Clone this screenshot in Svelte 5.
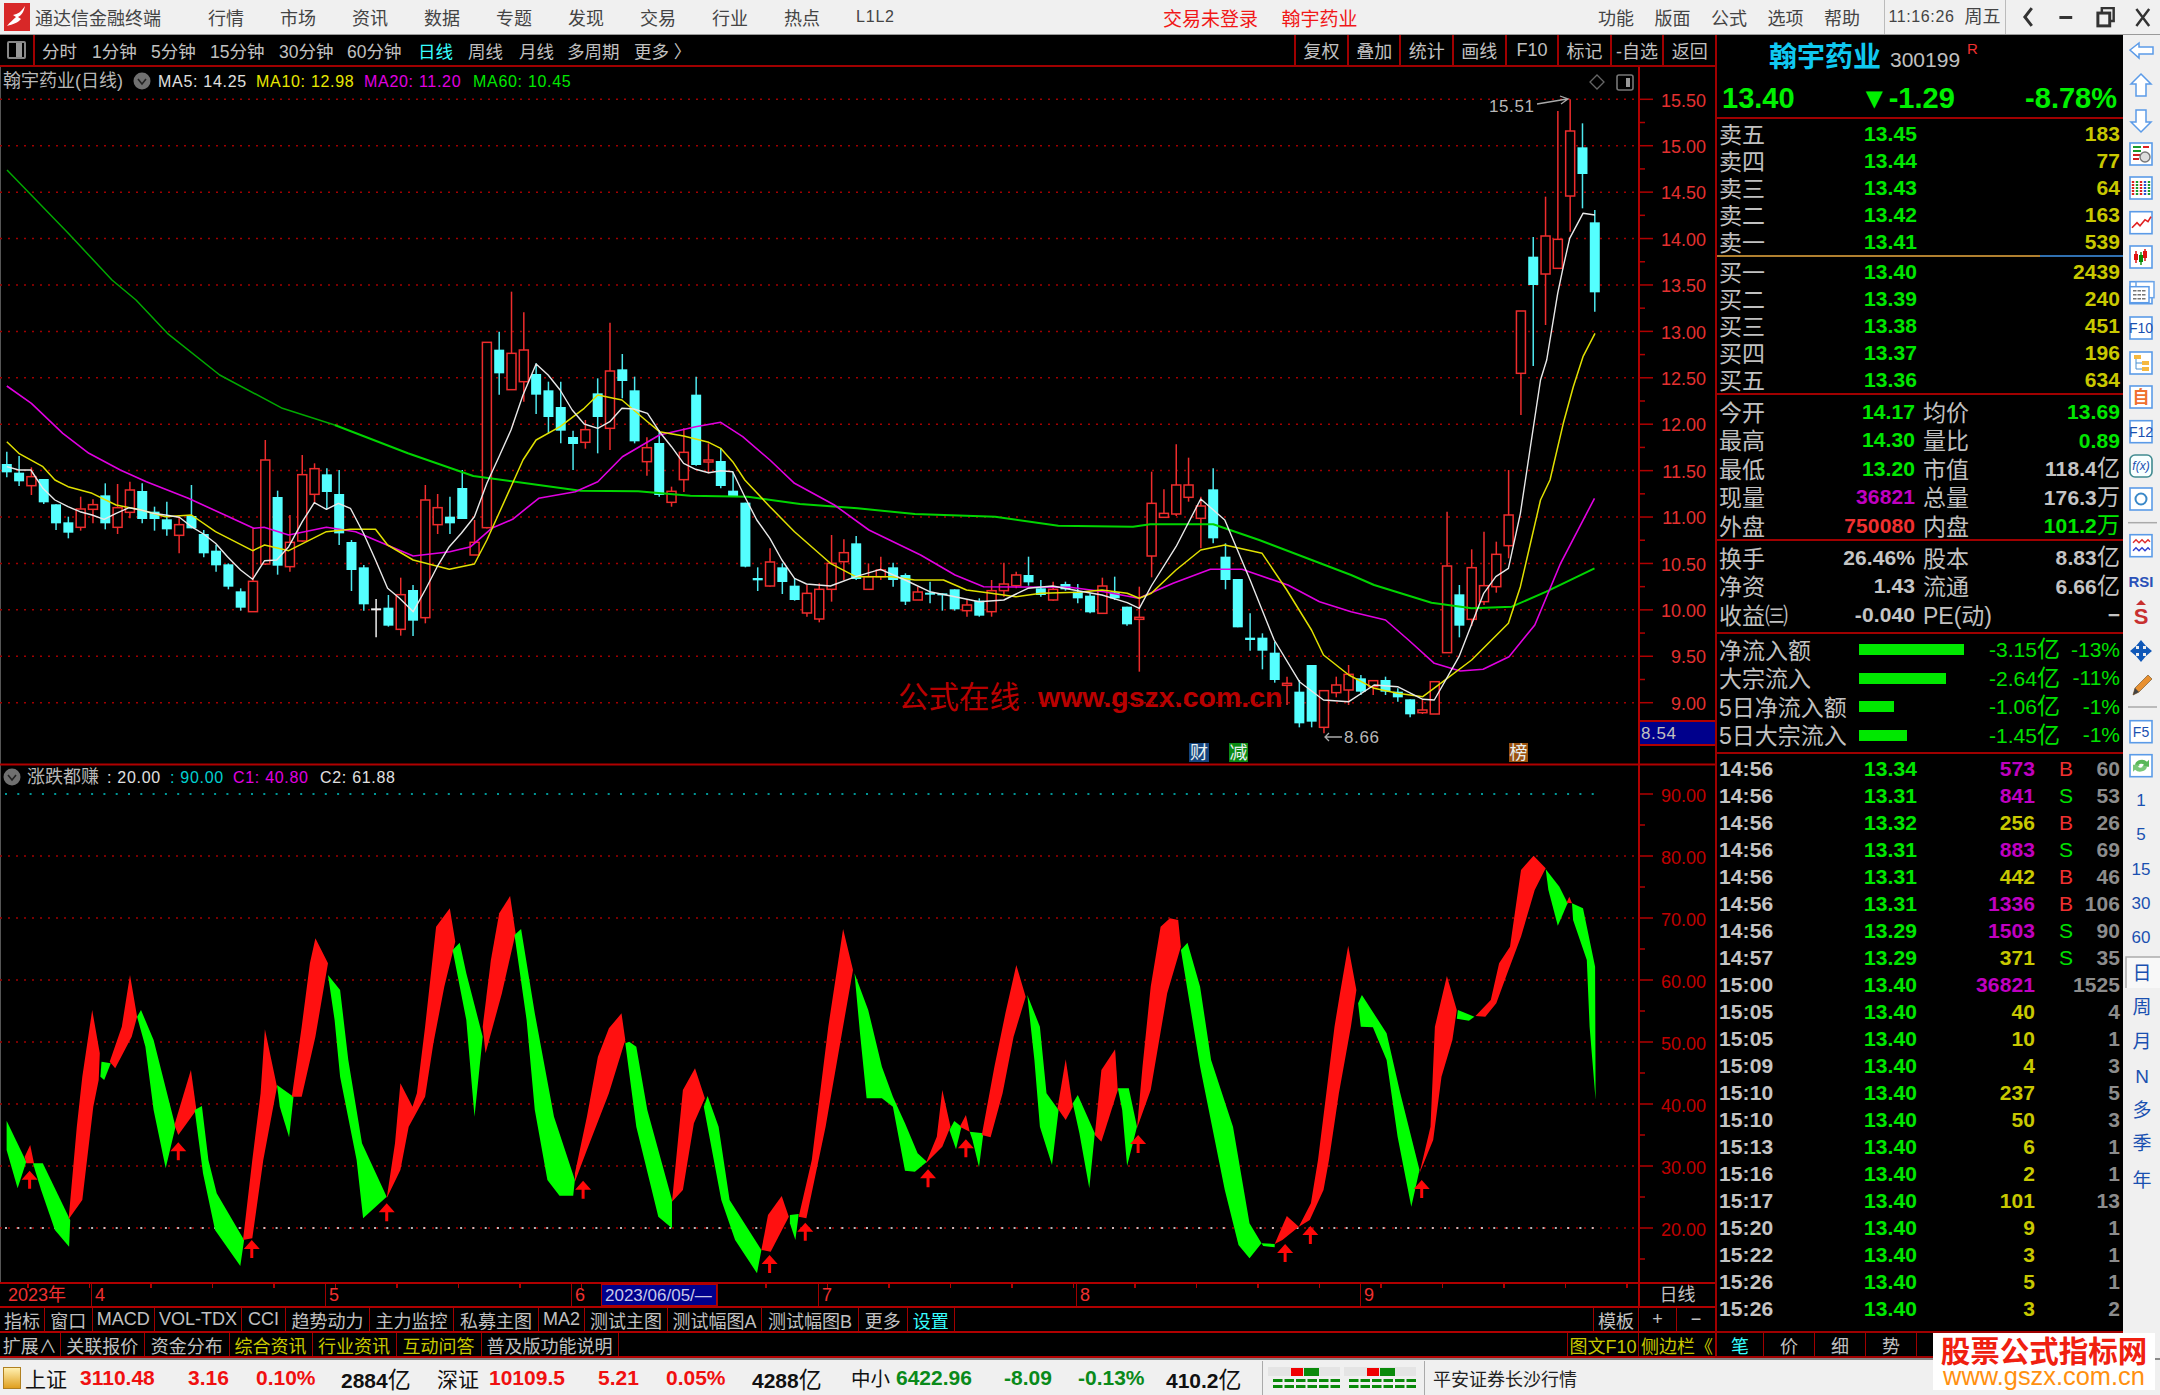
<script>
  const pts = (s, sx, ox, oy) => s.trim().split(/\s+/).map(p => { const [a, b] = p.split(',').map(Number); return [ox + a / sx, oy + b / 3]; });
  const poly = a => a.map(p => p[0].toFixed(1) + ',' + p[1].toFixed(1)).join(' ');
  const parts = t => { const m = /^(.*?)([亿万])$/.exec(t); return m ? [m[1], m[2]] : [t, '']; };

  const c7 = `515 552 577 592 c,528 578 604 618 c,562 590 617 645 r,597 597 667 672 c,673 673 730 750 c,710 727 758 775 c,650 687 742 752 r,658 674 688 730 r,610 646 730 748 c,612 683 742 762 r,605 630 697 715 r,610 633 717 730 c,680 695 717 752 c,665 718 748 767 c,710 734 766 820 r,615 708 745 745 c,750 762 820 832 c,795 812 856 875 c,850 853 920 928 c,925 934 983 992 c,745 904 995 995 r,480 540 852 855 r,632 651 857 884 c,705 787 860 875 r,525 584 783 785 r,550 566 643 670 r,565 583 636 688 c,570 642 760 795 c,780 786 870 933 c,855 862 973 992 c,957 985 987 1072 w,945 983 1037 1040 c,893 944 1048 1067 r,915 930 1022 1068 c,615 660 1013 1030 r,642 683 734 762 r,650 710 730 762 c,570 624 717 717 c,720 787 825 825 r,745 187 743 745 r,155 209 280 344 c,35 220 329 329 r,97 210 305 365 r,250 282 344 402 c,305 331 411 460 c,305 381 452 490 c,452 471 492 570 c,420 449 487 506 r,295 340 411 520 c,128 273 445 510 r,222 268 303 355 c,290 331 484 490 c,472 503 545 587 r,450 489 645 650 c,620 634 667 680 r,445 517 599 636 r,290 344 555 557 c,490 540 545 580 r,505 543 618 625 c,575 632 648 650 c,668 668 860 862 c,862 894 901 933 c,805 846 918 920 r,850 862 906 942 c,895 917 960 962 c,915 940 999 1010 r,910 928 1017 1027 r`;
  const c8 = `465 550 628 665 r,478 518 545 600 r,468 490 597 600 c,550 590 628 628 r,530 570 590 600 r,548 562 600 620 c,580 585 665 675 c,620 636 660 660 r,605 638 641 670 c,640 640 642 692 c,628 628 688 692 c,660 675 692 710 r,655 662 707 710 c,600 632 695 710 r,548 612 632 650 r,575 585 617 625 r,530 585 607 617 c,600 625 645 650 c,605 628 660 662 r,605 612 628 632 c,612 635 655 670 c,640 647 697 700 c,593 618 700 700 r,590 637 655 660 c,680 680 733 737 c,620 712 718 875 r,275 370 528 592 r,328 400 412 412 r,193 315 402 408 r,233 315 352 365 r,350 378 415 505 r,265 328 475 490 c,490 530 600 628 c,597 597 742 742 c,700 773 780 812 c,760 773 812 868 c,785 818 900 908 c,890 910 915 975 r,900 935 1030 1042 c,855 855 1025 1042 c,930 932 1042 1060 r,890 915 938 952 r,855 883 930 975 r,885 895 935 945 c,900 902 920 945 r,890 900 935 945 c,925 935 952 965 c,958 958 1003 1012 c,960 990 998 1002 r,905 905 1002 1002 r,395 558 818 818 r,615 643 737 772 c,508 563 718 738 r,455 617 665 675 r,485 523 620 638 r,270 405 497 535 r`;
  const c9 = `753 753 940 1065 r,531 590 675 918 c,410 528 642 795 r,153 538 625 625 r,118 213 408 515 r,190 262 342 445 c,450 487 697 755 c`;
  const parse = (s, oy) => s.split(',').map(r => { const f = r.split(' '); return { hi: oy + f[0] / 3, top: oy + f[1] / 3, bot: oy + f[2] / 3, lo: oy + f[3] / 3, k: f[4] }; });
  const candles = [...parse(c7, 280), ...parse(c8, 380), ...parse(c9, 60)].map((c, i) => ({ ...c, x: 6.8 + 12.31 * i }));

  const ma5 = [
    ...pts(`13,560 36,570 59,570 82,625 105,660 130,680 153,695 176,705 199,718 222,700 247,683 270,690 293,700 316,705 343,712 366,740 389,762 412,790 435,830 460,870 483,898 506,842 529,840 552,800 578,725 601,668 624,688 647,670 670,685 695,760 718,840 741,925 764,955 790,995 813,930 836,860 859,800 882,760 907,710 931,610 954,530 977,450 1000,345 1025,252 1048,285 1071,330 1094,390 1117,432 1143,445 1166,425 1189,385 1212,387 1238,400 1261,455 1284,500 1307,550 1330,568 1355,578 1378,572 1401,575 1424,650 1447,720 1472,775 1495,840 1519,895 1542,912`, 1.912, 0, 280),
    ...pts(`53,618 97,590 140,568 183,600 226,635 270,650 312,665 355,660 397,625 440,618 484,632 526,645 570,668 591,685 612,618 655,500 698,357 740,420 784,600 826,780 870,905 912,960 956,965 1000,915 1041,920 1085,958 1105,960 1148,830 1191,640 1212,590 1234,565 1255,400 1290,0`, 1.742, 800, 380),
    ...pts(`500,900 533,700 550,620 569,535 609,460 645,465`, 3, 1380, 60)
  ];
  const ma10 = [
    ...pts(`13,485 36,520 82,560 105,600 130,620 176,640 222,675 270,690 316,710 366,705 412,755 483,812 506,795 552,812 624,755 670,748 718,748 741,795 790,840 859,868 907,852 931,780 954,700 977,620 1000,540 1025,480 1071,440 1117,385 1143,345 1189,360 1238,425 1261,455 1307,468 1355,487 1378,505 1401,545 1424,600 1472,680 1519,755`, 1.912, 0, 280),
    ...pts(`53,550 97,590 160,590 200,600 250,600 290,630 333,640 376,650 420,640 484,637 526,630 570,640 591,655 612,640 655,570 698,510 740,495 805,520 848,630 891,750 912,825 956,885 1000,925 1041,940 1085,950 1120,905 1170,840 1234,730 1255,620 1290,360`, 1.742, 800, 380),
    ...pts(`510,1260 550,1090 580,980 609,890 645,820`, 3, 1380, 60)
  ];
  const ma20 = [
    ...pts(`13,318 60,370 120,460 170,520 230,570 280,605 360,655 430,705 485,745 505,742 552,765 624,742 680,755 740,795 790,828 860,815 900,800 940,745 980,718 1030,655 1100,635 1143,605 1190,530 1261,465 1330,440 1378,427 1420,470 1472,540 1519,610`, 1.912, 0, 280),
    ...pts(`60,375 120,450 210,525 270,585 320,620 470,622 530,635 590,655 650,610 715,568 770,568 850,615 905,665 960,695 1020,720 1060,780 1105,850 1150,873 1190,868 1235,830 1280,735 1325,550 1384,355`, 1.742, 800, 380)
  ];
  const ma60Steep = [
    [7, 170], [69, 234], [112, 280],
    ...pts(`260,60 320,160 420,285 540,385 640,435`, 1.912, 0, 280)
  ];
  const ma60Flat = [
    ...pts(`640,435 780,520 905,588 1030,615 1110,632 1220,634 1320,647 1430,650`, 1.912, 0, 280),
    ...pts(`0,372 100,385 200,402 340,410 450,437 580,440 610,433 720,433 800,480 960,585 1000,615 1100,668 1170,685 1240,680 1300,635 1384,565`, 1.742, 800, 380)
  ];

  const G = '#00ff00', R = '#ff1010';
  const rib10 = [
    [G, '12,1082 48,1205 32,1285 12,1170'], [R, '55,1155 62,1210 48,1210 45,1190'], [G, '60,1210 78,1210 128,1380 126,1460 100,1410 75,1290'],
    [R, '168,750 182,880 180,960 170,1040 150,1320 125,1378 140,1100 150,950'], [G, '185,905 202,910 190,960 183,950'], [R, '237,645 250,770 240,830 210,925 200,905 222,800'],
    [G, '257,750 280,840 320,1100 302,1225 280,1050 265,860 250,770'], [R, '348,930 358,1050 325,1125 318,1095'], [G, '368,1038 380,1200 395,1300 445,1440 438,1518 392,1410 370,1240 355,1050'],
    [R, '483,808 505,980 480,1200 460,1435 443,1440 460,1200 475,1000'], [G, '505,975 535,1010 527,1132 510,1040'], [R, '575,535 598,610 575,830 550,1010 532,1010 550,800 565,610'],
    [G, '598,645 620,690 635,900 660,1150 705,1310 662,1375 650,1200 620,950 610,780'], [R, '705,1315 720,1150 730,970 752,1040 760,1000 775,800 795,500 820,445 830,545 810,680 790,850 775,1010 745,1100 730,1230'],
    [G, '838,548 850,640 880,830 865,1070 850,780 825,570'], [R, '930,408 940,520 915,700 885,880 880,800 895,600 910,460'], [G, '950,507 975,760 1010,1070 1048,1260 1045,1307 1020,1307 998,1260 975,1050 960,780 938,525'],
    [R, '1133,760 1140,840 1110,1000 1070,1170 1048,1265 1048,1240 1070,1070 1090,890 1110,805'], [G, '1147,845 1160,860 1180,1050 1225,1320 1225,1405 1200,1370 1160,1100 1140,850'], [R, '1267,925 1285,1015 1265,1090 1245,1290 1225,1325 1245,990'],
    [G, '1290,1008 1310,1100 1330,1320 1388,1470 1380,1540 1340,1440 1315,1320 1283,1040'], [R, '1425,1308 1438,1370 1405,1475 1388,1470 1400,1365'], [G, '1440,1365 1456,1362 1450,1440 1440,1390'],
    [R, '1537,507 1555,630 1540,770 1505,1100 1470,1375 1456,1370 1480,1200 1510,800']
  ];
  const rib11 = [
    [G, '-10,640 15,750 40,920 60,1010 82,1090 105,1180 122,1205 100,1235 82,1232 60,1040 40,1015 12,1015 0,820'], [R, '150,990 165,1100 150,1160 120,1210 140,1130'], [G, '172,1083 185,1100 175,1168 163,1110'],
    [R, '193,1065 200,1115 182,1100'], [G, '200,1115 225,1120 217,1222 205,1140'], [R, '285,615 302,710 280,830 260,1000 238,1132 222,1125 245,920 265,760'],
    [G, '305,705 328,800 340,1000 362,1050 350,1215 328,1100 318,900'], [R, '375,898 388,1040 375,1080 360,1045'], [G, '397,1005 428,1120 418,1285 400,1120 388,1030'],
    [R, '465,868 470,990 440,1145 428,1125 440,930'], [G, '470,985 490,985 505,1100 487,1218 478,1050'], [R, '565,475 580,480 585,560 560,700 530,990 505,1105 515,920 530,680 548,500'],
    [G, '597,548 620,680 640,900 680,1100 710,1390 732,1450 710,1495 690,1455 665,1290 620,920 585,570'], [G, '732,1450 756,1452 756,1462 735,1458'], [R, '778,1368 800,1400 770,1440 756,1452'],
    [R, '800,1400 822,1330 835,1200 850,1000 865,800 875,700 890,557 905,690 895,800 873,1000 855,1200 845,1290 820,1380'], [G, '915,705 960,820 985,1000 1020,1230 1005,1340 980,1130 960,900 935,802 913,800 908,730'],
    [R, '1070,648 1088,750 1080,840 1060,950 1045,1140 1020,1240 1040,1100 1048,800'], [G, '1090,750 1120,770 1110,782 1088,776'], [R, '1122,768 1150,720 1165,610 1185,560 1205,330 1228,287 1250,325 1230,390 1205,530 1180,640 1160,730 1140,770'],
    [G, '1250,328 1275,380 1290,430 1272,497 1255,390'], [R, '1293,410 1298,430 1288,428'], [G, '1298,430 1318,445 1340,620 1341,1020 1330,800 1325,600 1300,480']
  ];
  const ribbons = [
    ...rib10.map(([c, s]) => ({ c, p: poly(pts(s, 1.823, 0, 760)) })),
    ...rib11.map(([c, s]) => ({ c, p: poly(pts(s, 1.823, 860, 760)) }))
  ];
  const arrows = [
    ...pts('54,1232 325,1147 459,1440 705,1330 1063,1262 1403,1485 1468,1388', 1.823, 0, 760),
    ...pts('124,1228 193,1138 507,1125 775,1452 821,1398 1024,1260', 1.823, 860, 760)
  ];

  const yP = p => 99.3 + (15.5 - p) * 92.83;
  const yS = v => 1228 - (v - 20) * 6.2;
  const mainLabels = ['15.50', '15.00', '14.50', '14.00', '13.50', '13.00', '12.50', '12.00', '11.50', '11.00', '10.50', '10.00', '9.50', '9.00'];
  const mainTicks = Array.from({ length: 27 }, (_, i) => ({ y: yP(15.5 - i * 0.25), major: i % 2 === 0 }));
  const subVals = [80, 70, 60, 50, 40, 30];
  const subTicks = Array.from({ length: 16 }, (_, i) => ({ y: yS(90 - i * 5), major: i % 2 === 0 }));

  const menus = ['行情', '市场', '资讯', '数据', '专题', '发现', '交易', '行业', '热点', 'L1L2'];
  const sysMenus = ['功能', '版面', '公式', '选项', '帮助'];
  const periods = [
    { t: '分时', w: 50 }, { t: '1分钟', w: 59 }, { t: '5分钟', w: 59 }, { t: '15分钟', w: 69 }, { t: '30分钟', w: 68 }, { t: '60分钟', w: 71 },
    { t: '日线', w: 50, on: true }, { t: '周线', w: 51 }, { t: '月线', w: 48 }, { t: '多周期', w: 67 }, { t: '更多 〉', w: 70 }
  ];
  const tools = ['复权', '叠加', '统计', '画线', 'F10', '标记', '-自选', '返回'];

  const sells = [['卖五', '13.45', '183'], ['卖四', '13.44', '77'], ['卖三', '13.43', '64'], ['卖二', '13.42', '163'], ['卖一', '13.41', '539']];
  const buys = [['买一', '13.40', '2439'], ['买二', '13.39', '240'], ['买三', '13.38', '451'], ['买四', '13.37', '196'], ['买五', '13.36', '634']];
  const stats = [
    ['今开', '14.17', 'gr', '均价', '13.69', 'gr'], ['最高', '14.30', 'gr', '量比', '0.89', 'gr'], ['最低', '13.20', 'gr', '市值', '118.4亿', 'gy'],
    ['现量', '36821', 'mg', '总量', '176.3万', 'gy'], ['外盘', '750080', 'rd', '内盘', '101.2万', 'gr']
  ];
  const stats2 = [['换手', '26.46%', 'gy', '股本', '8.83亿', 'gy'], ['净资', '1.43', 'gy', '流通', '6.66亿', 'gy'], ['收益㈢', '-0.040', 'gy', 'PE(动)', '−', 'gy']];
  const flows = [['净流入额', 105, '-3.15亿', '-13%'], ['大宗流入', 87, '-2.64亿', '-11%'], ['5日净流入额', 35, '-1.06亿', '-1%'], ['5日大宗流入', 48, '-1.45亿', '-1%']];
  const ticks = [
    ['14:56', '13.34', '573', 'mg', 'B', '60'], ['14:56', '13.31', '841', 'mg', 'S', '53'], ['14:56', '13.32', '256', 'ye', 'B', '26'], ['14:56', '13.31', '883', 'mg', 'S', '69'],
    ['14:56', '13.31', '442', 'ye', 'B', '46'], ['14:56', '13.31', '1336', 'mg', 'B', '106'], ['14:56', '13.29', '1503', 'mg', 'S', '90'], ['14:57', '13.29', '371', 'ye', 'S', '35'],
    ['15:00', '13.40', '36821', 'mg', '', '1525'], ['15:05', '13.40', '40', 'ye', '', '4'], ['15:05', '13.40', '10', 'ye', '', '1'], ['15:09', '13.40', '4', 'ye', '', '3'],
    ['15:10', '13.40', '237', 'ye', '', '5'], ['15:10', '13.40', '50', 'ye', '', '3'], ['15:13', '13.40', '6', 'ye', '', '1'], ['15:16', '13.40', '2', 'ye', '', '1'],
    ['15:17', '13.40', '101', 'ye', '', '13'], ['15:20', '13.40', '9', 'ye', '', '1'], ['15:22', '13.40', '3', 'ye', '', '1'], ['15:26', '13.40', '5', 'ye', '', '1'], ['15:26', '13.40', '3', 'ye', '', '2']
  ];
  const dates = [
    { t: '2023年', w: 91, c: 'rd' }, { t: '4', w: 234, c: 'rd' }, { t: '5', w: 246, c: 'rd' }, { t: '6', w: 30, c: 'rd' }, { t: '2023/06/05/—', w: 116, c: 'sel' },
    { t: '', w: 101, c: '' }, { t: '7', w: 258, c: 'rd' }, { t: '8', w: 284, c: 'rd' }, { t: '9', w: 278, c: 'rd' }
  ];
  const tabs1 = [
    { t: '指标', w: 45 }, { t: '窗口', w: 47.5 }, { t: 'MACD', w: 62.5 }, { t: 'VOL-TDX', w: 87 }, { t: 'CCI', w: 44 }, { t: '趋势动力', w: 84 }, { t: '主力监控', w: 84 },
    { t: '私募主图', w: 85 }, { t: 'MA2', w: 46 }, { t: '测试主图', w: 83 }, { t: '测试幅图A', w: 94 }, { t: '测试幅图B', w: 97 }, { t: '更多', w: 48.5 }, { t: '设置', w: 47.5, c: 'cy' }
  ];
  const tabs2 = [
    { t: '扩展∧', w: 60.5 }, { t: '关联报价', w: 84.5 }, { t: '资金分布', w: 84.5 }, { t: '综合资讯', w: 83, c: 'ye' }, { t: '行业资讯', w: 84, c: 'ye' }, { t: '互动问答', w: 85, c: 'ye' }, { t: '普及版功能说明', w: 137 }
  ];
  const sideTabs = [{ t: '笔', w: 47, c: 'cy' }, { t: '价', w: 51 }, { t: '细', w: 51 }, { t: '势', w: 51 }, { t: '', w: 52 }, { t: '', w: 50 }, { t: '', w: 51 }];
  const status = [
    { t: '上证', w: 55, c: 'bk cn21' }, { t: '3110.48', w: 108, c: 'up' }, { t: '3.16', w: 68, c: 'up' }, { t: '0.10%', w: 85, c: 'up' }, { t: '2884亿', w: 96, c: 'bk' },
    { t: '深证', w: 52, c: 'bk cn21' }, { t: '10109.5', w: 109, c: 'up' }, { t: '5.21', w: 68, c: 'up' }, { t: '0.05%', w: 86, c: 'up' }, { t: '4288亿', w: 99, c: 'bk' },
    { t: '中小', w: 45, c: 'bk cn20' }, { t: '6422.96', w: 108, c: 'dn' }, { t: '-8.09', w: 74, c: 'dn' }, { t: '-0.13%', w: 88, c: 'dn' }, { t: '410.2亿', w: 96, c: 'bk' }
  ];
  const boxes = [
    { y: 154, k: 'list' }, { y: 188, k: 'grid' }, { y: 222.7, k: 'line' }, { y: 257, k: 'kline' }, { y: 292.7, k: 'win' }, { y: 328, k: 'F10', t: 'F10' }, { y: 363, k: 'tree' },
    { y: 397, k: 'self', t: '自' }, { y: 431.7, k: 'F12', t: 'F12' }, { y: 466, k: 'fx', t: 'f(x)' }, { y: 499, k: 'ring' }, { y: 545.7, k: 'wave' }, { y: 731.7, k: 'F5', t: 'F5' }, { y: 765.7, k: 'refresh' }
  ];
  const cycles = [[800, '1'], [834, '5'], [869, '15'], [903, '30'], [937.7, '60']];
  const cycles2 = [[973, '日'], [1007.7, '周'], [1041.7, '月'], [1076, 'N'], [1110.7, '多'], [1143.6, '季'], [1180, '年']];
</script>

<div class="app">
  <header class="title">
    <svg class="logo" viewBox="0 0 26 28" aria-hidden="true">
      <rect width="26" height="28" fill="#d82828" />
      <path d="M21 3 C17 9 14 11 9 12 L12 14 C9 17 6 19 3 23 C9 21 14 20 17 16 L14 14 C18 12 20 8 21 3Z" fill="#fff" />
    </svg>
    <span class="appname">通达信金融终端</span>
    <nav class="menu">{#each menus as m}<span class:ascii={m === 'L1L2'}>{m}</span>{/each}</nav>
    <span class="notice n1">交易未登录</span>
    <span class="notice n2">翰宇药业</span>
    <nav class="sys">{#each sysMenus as m}<span>{m}</span>{/each}</nav>
    <span class="clock">11:16:26</span>
    <span class="week">周五</span>
    <svg class="winctl" viewBox="0 0 150 24" aria-hidden="true">
      <path d="M17 3 L10 12 L17 21" fill="none" stroke="#333" stroke-width="3" />
      <rect x="45" y="11" width="13" height="3" fill="#333" />
      <rect x="84" y="8" width="12" height="13" fill="none" stroke="#333" stroke-width="3" />
      <path d="M88 7 V3 H100 V16 H97" fill="none" stroke="#333" stroke-width="2.5" />
      <path d="M123 4 L136 21 M136 4 L123 21" stroke="#333" stroke-width="2.5" />
    </svg>
  </header>

  <div class="main">
    <section class="left">
      <div class="toolbar">
        <div class="tb-icon"><span class="tb-box"></span></div>
        <div class="periods">
          {#each periods as p}<span class:on={p.on} style="width:{p.w}px">{p.t}</span>{/each}
        </div>
        <div class="tools">
          {#each tools as t}<span>{t}</span>{/each}
        </div>
      </div>

      <svg class="chart" width="1715" height="1215" viewBox="0 67 1715 1215" role="img" aria-label="K线图">
        <line x1="0.5" y1="67" x2="0.5" y2="1282" stroke="#555" />
        {#each mainLabels as l}
          <line class="grid" x1="0" x2="1638" y1={yP(+l)} y2={yP(+l)} />
        {/each}
        {#each subVals as v}
          <line class="grid" x1="0" x2="1634" y1={yS(v)} y2={yS(v)} />
        {/each}
        <line class="grid" x1="0" x2="1634" y1={yS(20)} y2={yS(20)} />
        <line class="dot20" x1="5" x2="1596" y1={yS(20)} y2={yS(20)} />
        <line class="dot90" x1="5" x2="1596" y1={yS(90)} y2={yS(90)} />

        {#each candles as c}
          {#if c.k === 'c'}
            <line x1={c.x} x2={c.x} y1={c.hi} y2={c.lo} stroke="#4ee8ee" stroke-width="1.5" />
            <rect x={c.x - 5} y={c.top} width="10" height={Math.max(c.bot - c.top, 2)} fill="#54ffff" />
          {:else if c.k === 'r'}
            <line x1={c.x} x2={c.x} y1={c.hi} y2={c.top} stroke="#ee2c2c" stroke-width="1.5" />
            <line x1={c.x} x2={c.x} y1={c.bot} y2={c.lo} stroke="#ee2c2c" stroke-width="1.5" />
            <rect x={c.x - 4.5} y={c.top} width="9" height={Math.max(c.bot - c.top, 2)} fill="#000" stroke="#ee2c2c" stroke-width="1.5" />
          {:else}
            <line x1={c.x} x2={c.x} y1={c.hi} y2={c.lo} stroke="#eee" stroke-width="1.5" />
            <rect x={c.x - 5} y={c.top} width="10" height="2" fill="#eee" />
          {/if}
        {/each}

        <polyline class="ma" points={poly(ma60Steep)} stroke="#00a800" stroke-width="1.5" />
        <polyline class="ma" points={poly(ma60Flat)} stroke="#00d400" stroke-width="2" />
        <polyline class="ma" points={poly(ma20)} stroke="#e000e0" stroke-width="1.6" />
        <polyline class="ma" points={poly(ma10)} stroke="#e0e000" stroke-width="1.5" />
        <polyline class="ma" points={poly(ma5)} stroke="#e8e8e8" stroke-width="1.4" />

        <text class="lg gy" x="3" y="81">翰宇药业(日线)</text>
        <circle cx="142" cy="81" r="8.5" fill="#707070" />
        <path d="M138 79 L142 84 L146 79" fill="none" stroke="#222" stroke-width="1.6" />
        <text class="lg wh sp" x="158" y="81">MA5: 14.25</text>
        <text class="lg ye sp" x="256" y="81">MA10: 12.98</text>
        <text class="lg mg sp" x="364" y="81">MA20: 11.20</text>
        <text class="lg gr sp" x="473" y="81">MA60: 10.45</text>

        <path d="M1597 75 L1604 82 L1597 89 L1590 82Z" fill="none" stroke="#666" stroke-width="1.3" />
        <rect x="1617" y="75" width="16" height="15" rx="2" fill="none" stroke="#777" stroke-width="1.6" />
        <rect x="1626" y="78" width="4" height="9" fill="#999" />
        <text class="lbl gy" x="1489" y="106">15.51</text>
        <path d="M1537 104 L1567 99 M1560 96 L1568 99 L1561 104" fill="none" stroke="#aaa" stroke-width="1.3" />
        <text class="lbl gy" x="1344" y="737">8.66</text>
        <path d="M1342 737 L1325 737 M1329 733 L1325 737 L1329 741" fill="none" stroke="#aaa" stroke-width="1.3" />
        <text class="wm" x="898" y="697">公式在线</text>
        <text class="wm wmen" x="1038" y="697">www.gszx.com.cn</text>

        <rect x="1189" y="743" width="20" height="19" fill="#15447e" />
        <text class="flag" x="1199" y="752.5">财</text>
        <rect x="1229" y="743" width="19" height="19" fill="#0a8a14" />
        <text class="flag" x="1238.5" y="752.5">减</text>
        <rect x="1509" y="743" width="19" height="19" fill="#9a5210" />
        <text class="flag" x="1518.5" y="752.5">榜</text>

        <line class="axis" x1="1639" x2="1639" y1="67" y2="1282" />
        {#each mainTicks as t}
          <line class="tick" x1="1639" x2={t.major ? 1653 : 1645} y1={t.y} y2={t.y} />
        {/each}
        {#each mainLabels as l}
          <text class="axt" x="1706" y={yP(+l) + 1.2}>{l}</text>
        {/each}
        <rect x="1640" y="721.5" width="75" height="23" fill="#00008c" />
        <line class="axis" x1="1639" x2="1715" y1="721" y2="721" />
        <line class="axis" x1="1639" x2="1715" y1="745" y2="745" />
        <text class="lbl cur" x="1641" y="733">8.54</text>

        <line class="axis" x1="0" x2="1715" y1="764.5" y2="764.5" />

        {#each ribbons as r}<polygon points={r.p} fill={r.c} />{/each}
        {#each arrows as a}
          <polygon points="{a[0]},{a[1]} {a[0] + 8},{a[1] + 9} {a[0] + 1.5},{a[1] + 9} {a[0] + 1.5},{a[1] + 18} {a[0] - 1.5},{a[1] + 18} {a[0] - 1.5},{a[1] + 9} {a[0] - 8},{a[1] + 9}" fill="#ff0808" />
        {/each}

        <circle cx="12" cy="777" r="8.5" fill="#707070" />
        <path d="M8 775 L12 780 L16 775" fill="none" stroke="#222" stroke-width="1.6" />
        <text class="lg gy" x="27" y="777">涨跌都赚</text>
        <text class="lg wh sp" x="107" y="777">: 20.00</text>
        <text class="lg cy sp" x="170" y="777">: 90.00</text>
        <text class="lg mg sp" x="233" y="777">C1: 40.80</text>
        <text class="lg wh sp" x="320" y="777">C2: 61.88</text>

        {#each subTicks as t}
          <line class="tick" x1="1639" x2={t.major ? 1653 : 1645} y1={t.y} y2={t.y} />
        {/each}
        {#each [90, 80, 70, 60, 50, 40, 30, 20] as v}
          <text class="axs" x="1706" y={yS(v) + 1.8}>{v}.00</text>
        {/each}
      </svg>

      <div class="dates">
        {#each dates as d}<span class={d.c} style="width:{d.w}px">{d.t}</span>{/each}
        <span class="dlabel">日线</span>
      </div>
      <div class="tabs t1">
        {#each tabs1 as t}<span class={t.c} style="width:{t.w}px">{t.t}</span>{/each}
        <span class="fill"></span>
        <span class="tr" style="width:45px">模板</span>
        <span class="tr" style="width:38px">+</span>
        <span class="tr last" style="width:39px">−</span>
      </div>
      <div class="tabs t2">
        {#each tabs2 as t}<span class={t.c} style="width:{t.w}px">{t.t}</span>{/each}
        <span class="fill"></span>
        <span class="ye tr" style="width:71px">图文F10</span>
        <span class="ye tr last" style="width:77px">侧边栏《</span>
      </div>
    </section>

    <aside class="panel">
      <div class="head">
        <div class="name"><b>翰宇药业</b><span class="code">300199</span><sup>R</sup></div>
        <div class="quote"><span>13.40</span><span>▼-1.29</span><span>-8.78%</span></div>
      </div>
      <div class="book">
        {#each sells as r}<div class="ob"><span class="cn">{r[0]}</span><span class="n gr">{r[1]}</span><span class="n ye ra">{r[2]}</span></div>{/each}
      </div>
      <div class="mid"></div>
      <div class="book buy">
        {#each buys as r}<div class="ob"><span class="cn">{r[0]}</span><span class="n gr">{r[1]}</span><span class="n ye ra">{r[2]}</span></div>{/each}
      </div>
      <div class="stats">
        {#each stats as r}<div class="st"><span class="cn">{r[0]}</span><span class="n ra {r[2]}">{r[1]}</span><span class="cn l2">{r[3]}</span><span class="n ra {r[5]}">{parts(r[4])[0]}<span class="u">{parts(r[4])[1]}</span></span></div>{/each}
      </div>
      <div class="stats second">
        {#each stats2 as r}<div class="st"><span class="cn">{r[0]}</span><span class="n ra {r[2]}">{r[1]}</span><span class="cn l2">{r[3]}</span><span class="n ra {r[5]}">{parts(r[4])[0]}<span class="u">{parts(r[4])[1]}</span></span></div>{/each}
      </div>
      <div class="flow">
        {#each flows as r}
          <div class="fl"><span class="cn">{r[0]}</span><span class="barcell"><i class="bar" style="width:{r[1]}px"></i></span><span class="fv">{parts(r[2])[0]}<span class="u">{parts(r[2])[1]}</span></span><span class="fv pct ra">{r[3]}</span></div>
        {/each}
      </div>
      <div class="ticks">
        {#each ticks as r}
          <div class="tk"><span class="n gy">{r[0]}</span><span class="n gr">{r[1]}</span><span class="n ra {r[3]}">{r[2]}</span><span class="bs" class:buy={r[4] === 'B'}>{r[4]}</span><span class="n ra dim">{r[5]}</span></div>
        {/each}
      </div>
      <div class="sidetabs">
        {#each sideTabs as t}<span class={t.c} style="width:{t.w}px">{t.t}</span>{/each}
      </div>
    </aside>

    <svg class="strip" width="37" height="1325" viewBox="2123 35 37 1325" role="img" aria-label="工具栏">
      <rect x="2123" y="35" width="37" height="1325" fill="#f0f0f0" />
      <path d="M2130 50 L2139 43 V47 H2153 V54 H2139 V58Z" class="oa" />
      <path d="M2141 74 L2151 84 H2146 V96 H2136 V84 H2131Z" class="oa" />
      <path d="M2136 110 H2146 V122 H2151 L2141 132 L2131 122 H2136Z" class="oa" />

      {#each boxes as b}
        {#if b.k === 'fx'}
          <rect x="2130" y={b.y - 11} width="22" height="22" rx="5" class="bx teal" />
        {:else}
          <rect x="2130" y={b.y - 11} width="22" height="22" class="bx" />
        {/if}
        {#if b.t && b.k !== 'self' && b.k !== 'fx'}
          <text class="bt" x="2141" y={b.y}>{b.t}</text>
        {/if}
        {#if b.k === 'self'}<text class="bt self" x="2141" y={b.y}>自</text>{/if}
        {#if b.k === 'fx'}<text class="bt fx" x="2141" y={b.y}>f(x)</text>{/if}
        {#if b.k === 'list'}
          <path d="M2133 {b.y - 7}h8M2133 {b.y - 3}h8" stroke="#1a9a2a" stroke-width="2" /><path d="M2143 {b.y - 7}h6" stroke="#e02020" stroke-width="2" /><path d="M2133 {b.y + 1}h8M2133 {b.y + 5}h6" stroke="#d02020" stroke-width="2" />
          <circle cx="2145" cy={b.y + 3} r="5" fill="#ddd" stroke="#777" stroke-width="1.4" />
        {:else if b.k === 'grid'}
          {#each [0, 4, 8, 12, 16] as dx, i}
            <path d="M{2133 + dx} {b.y - 7}v14" stroke={['#e02020', '#1a9a2a', '#e02020', '#2a50d0', '#1a9a2a'][i]} stroke-width="2.4" stroke-dasharray="2 1" />
          {/each}
        {:else if b.k === 'line'}
          <path d="M2132 {b.y + 5}l5-5 3 3 5-6 3 2 3-5" fill="none" stroke="#e02020" stroke-width="1.6" />
        {:else if b.k === 'kline'}
          <path d="M2136 {b.y - 6}v12M2145 {b.y - 8}v12" stroke="#d00" stroke-width="1.4" /><rect x="2134" y={b.y - 3} width="4" height="6" fill="#e01010" /><rect x="2143" y={b.y - 6} width="4" height="7" fill="#e01010" />
          <path d="M2141 {b.y - 5}v13" stroke="#0a8a0a" stroke-width="1.4" /><rect x="2139" y={b.y - 2} width="4" height="7" fill="#0a8a0a" />
        {:else if b.k === 'win'}
          <rect x="2136" y={b.y - 11} width="18" height="16" fill="#fff" stroke="#6ba4e8" stroke-width="1.5" />
          <rect x="2130" y={b.y - 6} width="19" height="16" fill="#fff" stroke="#5b9be8" stroke-width="1.5" />
          <path d="M2133 {b.y - 2}h13M2133 {b.y + 2}h13M2133 {b.y + 6}h13" stroke="#777" stroke-width="1.6" stroke-dasharray="3.5 1" />
        {:else if b.k === 'tree'}
          <rect x="2134" y={b.y - 8} width="7" height="4" fill="#f5b840" /><rect x="2142" y={b.y - 2} width="7" height="4" fill="#f5b840" /><rect x="2142" y={b.y + 4} width="7" height="4" fill="#f5b840" />
          <path d="M2136 {b.y - 4}v10h6M2136 {b.y}h6" fill="none" stroke="#4a90d0" />
        {:else if b.k === 'ring'}
          <circle cx="2141" cy={b.y} r="5.5" fill="none" stroke="#3a88c8" stroke-width="2" />
        {:else if b.k === 'wave'}
          <path d="M2133 {b.y - 3}l3-3 3 3 3-3 3 3 3-3 2 2" fill="none" stroke="#e03030" stroke-width="1.5" />
          <path d="M2133 {b.y + 5}l3-3 3 3 3-3 3 3 3-3 2 2" fill="none" stroke="#3040d0" stroke-width="1.5" />
        {:else if b.k === 'refresh'}
          <path d="M2135 {b.y - 1}a7 6 0 0 1 12-3l2-2v7h-7l2-2a4 4 0 0 0-6 1Z" fill="#58b858" />
          <path d="M2147 {b.y + 1}a7 6 0 0 1-12 3l-2 2v-7h7l-2 2a4 4 0 0 0 6-1Z" fill="#78c878" />
        {/if}
      {/each}

      <line x1="2128" x2="2157" y1="522.7" y2="522.7" class="sepl" />
      <text class="rsi" x="2141" y="581">RSI</text>
      <text class="dollar" x="2141" y="616">S</text>
      <path d="M2136 605 L2141 600 L2146 605Z" fill="#c83030" />
      <path d="M2141 640 L2146 646 H2143 V649 H2146 V646 L2152 651 L2146 656 V653 H2143 V656 H2146 L2141 662 L2136 656 H2139 V653 H2136 V656 L2130 651 L2136 646 V649 H2139 V646 H2136Z" fill="#1058b8" />
      <path d="M2133 695 L2135 688 L2148 675 L2152 679 L2139 692Z" fill="#e89030" stroke="#8a6a40" stroke-width="0.8" />
      <path d="M2133 695 L2135 688 L2139 692Z" fill="#444" />
      <line x1="2128" x2="2157" y1="707" y2="707" class="sepl" />

      {#each cycles as c}<text class="cyc" x="2141" y={c[0]}>{c[1]}</text>{/each}
      <rect x="2126" y="957" width="34" height="31" fill="#f8f8f8" />
      <path d="M2126 988 V957 H2160" fill="none" stroke="#aaa" stroke-width="1.5" />
      {#each cycles2 as c}<text class="cyc cj" x="2142" y={c[0]}>{c[1]}</text>{/each}
    </svg>
  </div>

  <footer class="status">
    <span class="st-ico"></span>
    {#each status as s}<span class="si {s.c}" style="width:{s.w}px">{parts(s.t)[0]}<span class="u">{parts(s.t)[1]}</span></span>{/each}
    <span class="st-sep"></span>
    <svg class="blocks" width="150" height="30" viewBox="0 0 150 30" aria-hidden="true">
      {#each [0, 76] as ox}
        <rect x={ox} y="4" width="72" height="9" fill="#e4e4e4" />
        <rect x={ox + 23} y="5" width="12" height="8" fill="#f00000" />
        <rect x={ox + 36} y="5" width="15" height="8" fill="#0a8a0a" />
        {#each [0, 1, 2, 3, 4, 5] as i}
          <rect x={ox + 5 + i * 11.5} y="16" width="9.5" height="3" fill="#0a8a0a" />
          <rect x={ox + 5 + i * 11.5} y="22" width="9.5" height="3" fill="#0a8a0a" />
        {/each}
      {/each}
    </svg>
    <span class="st-sep sp2"></span>
    <span class="broker">平安证券长沙行情</span>
  </footer>

  <div class="stamp">
    <span class="stamp-a">股票公式指标网</span>
    <span class="stamp-b">www.gszx.com.cn</span>
  </div>
</div>

<style>
  :global(body) { margin: 0; background: #000; }
  .app {
    position: relative; width: 2160px; height: 1395px; overflow: hidden; background: #000; color: #c0c0c0;
    display: flex; flex-direction: column;
    font-family: "Liberation Sans", "Noto Sans CJK SC", sans-serif; font-size: 18px;
  }
  .title { height: 34px; flex: none; display: flex; align-items: center; background: #f0f0f0; color: #444; border-bottom: 1px solid #9a9a9a; box-sizing: content-box; }
  .logo { width: 26px; height: 28px; margin-left: 4px; flex: none; }
  .appname { margin-left: 5px; width: 127px; flex: none; white-space: nowrap; }
  .menu { display: flex; align-items: center; margin-left: 46px; flex: none; }
  .menu span { width: 72px; flex: none; }
  .menu .ascii { font-size: 16px; letter-spacing: .8px; }
  .notice { color: #f01818; font-size: 19px; flex: none; }
  .n1 { margin-left: 235px; width: 118.5px; }
  .n2 { width: 316.5px; }
  .sys { display: flex; flex: none; }
  .sys span { width: 56.5px; flex: none; font-size: 18px; }
  .clock { margin-left: 3px; padding-left: 4px; border-left: 1px solid #bbb; height: 34px; line-height: 34px; width: 76px; flex: none; font-size: 16px; letter-spacing: .6px; }
  .week { width: 40px; flex: none; border-right: 1px solid #bbb; height: 34px; line-height: 34px; }
  .winctl { width: 148px; height: 24px; margin-left: 9px; flex: none; }

  .main { flex: 1; min-height: 0; display: flex; }
  .left { width: 1715px; flex: none; display: flex; flex-direction: column; }
  .toolbar { height: 32px; flex: none; display: flex; align-items: center; border-bottom: 2px solid #a00000; box-sizing: border-box; }
  .tb-icon { width: 35px; height: 100%; flex: none; border-right: 2px solid #a00000; box-sizing: border-box; display: flex; align-items: center; justify-content: center; }
  .tb-box { width: 15px; height: 14px; border: 2px solid #888; border-radius: 2px; background: linear-gradient(90deg, transparent 50%, #999 50%, #999 85%, transparent 85%); }
  .periods { display: flex; margin-left: 7px; }
  .periods span { flex: none; font-size: 17.5px; white-space: nowrap; }
  .periods .on { color: #38ffff; }
  .tools { display: flex; margin-left: auto; height: 100%; }
  .tools span { width: 52.6px; border-left: 2px solid #a00000; box-sizing: border-box; display: flex; align-items: center; justify-content: center; font-size: 18px; white-space: nowrap; }

  .chart { display: block; flex: none; }
  .grid { stroke: #a00000; stroke-width: 1.5; stroke-dasharray: 2 6; }
  .dot90 { stroke: #00c8c8; stroke-width: 1.5; stroke-dasharray: 2 10.3; }
  .dot20 { stroke: #f0f0f0; stroke-width: 1.5; stroke-dasharray: 2 10.3; }
  .ma { fill: none; stroke-linejoin: round; }
  .axis { stroke: #b00000; stroke-width: 2; }
  .tick { stroke: #b00000; stroke-width: 1.5; }
  text { font-family: "Liberation Sans", "Noto Sans CJK SC", sans-serif; dominant-baseline: central; }
  .lg { font-size: 18px; }
  .sp { font-size: 16px; letter-spacing: .7px; }
  .lbl { font-size: 17px; letter-spacing: .6px; }
  .gy { fill: #b8b8b8; color: #c4c4c4; }
  .wh { fill: #e0e0e0; }
  .ye { fill: #e8e800; color: #c8c800; }
  .mg { fill: #e000e0; color: #c000c0; }
  .gr { fill: #00e800; color: #00e600; }
  .cy { fill: #00d0d0; color: #38ffff; }
  .rd { color: #f03030; }
  .axt { font-size: 18px; fill: #e43030; text-anchor: end; }
  .axs { font-size: 18px; fill: #c00000; text-anchor: end; }
  .cur { fill: #c0c0c0; }
  .wm { font-size: 30.5px; font-weight: 400; fill: #b80000; }
  .wmen { font-size: 28.5px; font-weight: 700; }
  .flag { font-size: 18px; fill: #e8f0f0; text-anchor: middle; }

  .dates { height: 24px; flex: none; display: flex; align-items: stretch; border-top: 2px solid #b00000; box-sizing: border-box; font-size: 18px;
    background: repeating-linear-gradient(90deg, #b00000 0 1.5px, transparent 1.5px 61.5px) 27px 0 / 100% 4px no-repeat; }
  .dates span { flex: none; box-sizing: border-box; padding-left: 3px; white-space: nowrap; line-height: 22px; border-left: 1.5px solid #a00000; }
  .dates span:first-child { padding-left: 8px; border-left: 0; }
  .dates .sel { background: #00008c; color: #c8c8e8; border: 1px solid #b00000; font-size: 17px; }
  .dlabel { width: 77px; text-align: center; padding-left: 0 !important; border-left: 2px solid #b00000 !important; }
  .tabs { display: flex; flex: none; box-sizing: border-box; border-top: 2px solid #b00000; align-items: stretch; font-size: 18px; }
  .t1 { height: 25px; }
  .t2 { height: 27px; border-bottom: 2px solid #b00000; }
  .tabs span, .sidetabs span { flex: none; box-sizing: border-box; border-right: 1.5px solid #a00000; display: flex; align-items: center; justify-content: center; white-space: nowrap; }
  .tabs .fill { flex: 1; border-right: 0; }
  .tabs .tr { border-left: 1.5px solid #a00000; border-right: 0; }
  .tabs .last { border-right: 0; }

  .panel { width: 408px; flex: none; display: flex; flex-direction: column; border-left: 2px solid #a00000; box-sizing: border-box; font-size: 21px; }
  .cn { font-size: 23px; line-height: 1; padding-top: 3px; white-space: nowrap; }
  .n { font-weight: 700; font-size: 21px; white-space: nowrap; letter-spacing: .1px; }
  .u { font-weight: 400; font-size: 23px; }
  .ra { text-align: right; }
  .rd { color: #f03030; }
  .dim { color: #8c8c8c; }
  .head { height: 84px; flex: none; box-sizing: border-box; border-bottom: 2px solid #a00000; }
  .name { height: 46px; display: flex; align-items: baseline; padding: 5px 0 0 52px; box-sizing: border-box; }
  .name b { color: #10c8f0; font-size: 28px; font-weight: 700; line-height: 36px; }
  .code { font-size: 21px; margin-left: 9px; color: #c0c0c0; }
  sup { color: #f03030; font-size: 15px; margin-left: 7px; line-height: 0; position: relative; top: -13px; vertical-align: baseline; }
  .quote { display: grid; grid-template-columns: 138px 163px 94px; padding: 1px 0 0 5px; color: #00f000; font-size: 29px; font-weight: 700; height: 32px; line-height: 32px; }
  .quote span:last-child { text-align: right; }
  .book { height: 136px; flex: none; padding-top: 1px; box-sizing: border-box; }
  .book.buy { height: 138px; padding-top: 1px; border-bottom: 2px solid #a00000; }
  .ob { height: 27px; display: grid; grid-template-columns: 145px 60px 1fr; padding: 0 3px 0 2px; align-items: center; line-height: 27px; }
  .mid { height: 2px; flex: none; background: linear-gradient(90deg, #b08030 79.5%, #3070b0 79.5%); }
  .stats { height: 146px; flex: none; box-sizing: border-box; padding-top: 2px; border-bottom: 2px solid #a00000; }
  .stats.second { height: 93px; }
  .st { height: 28.5px; display: grid; grid-template-columns: 62px 134px 68px 1fr; padding: 0 3px 0 2px; align-items: center; line-height: 28.5px; }
  .l2 { padding-left: 8px; }
  .flow { height: 120px; flex: none; box-sizing: border-box; padding-top: 1px; border-bottom: 2px solid #a00000; color: #00e000; }
  .fl { height: 28.5px; display: grid; grid-template-columns: 140px 130px 71px 1fr; padding: 0 3px 0 2px; align-items: center; line-height: 28.5px; }
  .fl .cn { color: #c0c0c0; }
  .bar { display: block; height: 11px; background: #00e800; }
  .fv { font-size: 21px; white-space: nowrap; }
  .pct { font-weight: 400; }
  .ticks { flex: 1; min-height: 0; padding-top: 1px; }
  .tk { height: 27px; display: grid; grid-template-columns: 145px 100px 71px 23px 1fr; padding: 0 3px 0 2px; align-items: center; line-height: 27px; }
  .bs { font-size: 21px; color: #00e000; padding-left: 24px; width: 0; }
  .bs.buy { color: #f03030; }
  .sidetabs { height: 27px; flex: none; display: flex; border-top: 2px solid #a00000; border-bottom: 2px solid #a00000; box-sizing: border-box; font-size: 18px; }

  .strip { display: block; flex: none; }
  .oa { fill: #fff; stroke: #5b9be8; stroke-width: 1.5; }
  .bx { fill: #fff; stroke: #5b9be8; stroke-width: 1.6; }
  .teal { stroke: #408a90; fill: #f8ffff; }
  .sepl { stroke: #aaa; stroke-width: 1.5; }
  .bt { font-size: 14px; fill: #1a50b0; text-anchor: middle; }
  .self { font-size: 17px; font-weight: 700; fill: #f07030; }
  .fx { font-size: 12px; font-style: italic; fill: #1a50b0; }
  .rsi { font-size: 15px; font-weight: 700; fill: #2a50b8; text-anchor: middle; }
  .dollar { font-size: 22px; font-weight: 700; fill: #c83030; text-anchor: middle; }
  .cyc { font-size: 17px; fill: #1a50b0; text-anchor: middle; }
  .cj { font-size: 19px; }

  .status { height: 37px; flex: none; display: flex; align-items: center; background: #f0f0f0; font-size: 21px; font-weight: 700; border-top: 2px solid #888; box-sizing: border-box; }
  .st-ico { width: 18px; height: 22px; margin: 0 4px 0 3px; flex: none; background: linear-gradient(#fff0b0, #e0a020); border: 1px solid #b08020; box-sizing: border-box; }
  .si { flex: none; white-space: nowrap; }
  .si.cn21 { font-weight: 400; font-size: 21px; }
  .si.cn20 { font-weight: 400; font-size: 19.5px; }
  .bk { color: #111; }
  .up { color: #f01010; }
  .dn { color: #0a8a1a; }
  .st-sep { width: 1px; height: 34px; background: #aaa; flex: none; margin-right: 5px; }
  .sp2 { margin-left: 6px; }
  .blocks { flex: none; }
  .broker { font-size: 18px; font-weight: 400; color: #222; margin-left: 3px; white-space: nowrap; }

  .stamp { position: absolute; left: 1933px; top: 1333px; width: 222px; height: 57px; background: #fff; display: flex; flex-direction: column; align-items: center; }
  .stamp-a { font-size: 29.5px; font-weight: 700; color: #f02010; line-height: 38px; white-space: nowrap; }
  .stamp-b { font-size: 25.4px; color: #ff9010; line-height: 10px; white-space: nowrap; }
</style>
